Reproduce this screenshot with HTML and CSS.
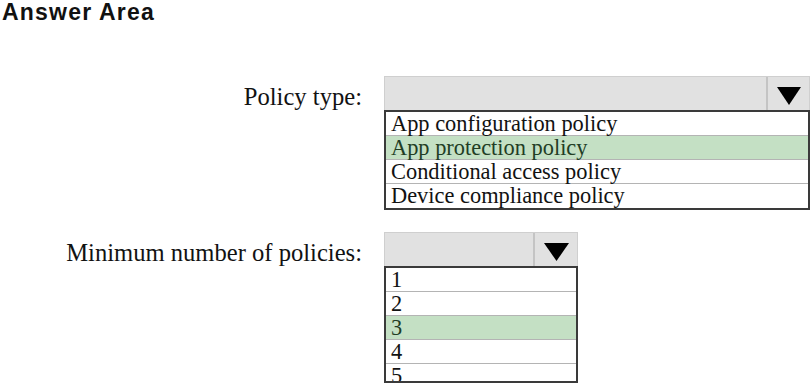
FILE: index.html
```html
<!DOCTYPE html>
<html lang="en">
  <head>
    <meta charset="UTF-8" />
    <meta name="viewport" content="width=device-width, initial-scale=1.0" />
    <title>Answer Area</title>
    <link rel="stylesheet" href="styles.css">
  </head>
  <body>
    <div class="answer-area">
      <h1>Answer Area</h1>

      <div class="question question-type">
        <div class="question-label">Policy type:</div>
        <div class="dropdown dropdown-policy">
          <div class="dropdown-head">
            <div class="dropdown-field"></div>
            <div class="dropdown-toggle">
              <svg width="24" height="18" viewBox="0 0 24 18">
                <polygon points="0,0 24,0 12,18" fill="#000" />
              </svg>
            </div>
          </div>
          <ul class="dropdown-list">
            <li>App configuration policy</li>
            <li class="selected">App protection policy</li>
            <li>Conditional access policy</li>
            <li>Device compliance policy</li>
          </ul>
        </div>
      </div>

      <div class="question question-count">
        <div class="question-label">Minimum number of policies:</div>
        <div class="dropdown dropdown-count">
          <div class="dropdown-head">
            <div class="dropdown-field"></div>
            <div class="dropdown-toggle">
              <svg width="25" height="18" viewBox="0 0 25 18">
                <polygon points="0,0 25,0 12.5,18" fill="#000" />
              </svg>
            </div>
          </div>
          <ul class="dropdown-list">
            <li>1</li>
            <li>2</li>
            <li class="selected">3</li>
            <li>4</li>
            <li>5</li>
          </ul>
        </div>
      </div>
    </div>
  </body>
</html>
```

FILE: styles.css
```css
:root {
  --text: #121212;
  --head-bg: #e1e1e1;
  --head-border: #cfcfcf;
  --toggle-line: #c4c4c4;
  --list-border: #3a3a3a;
  --row-line: #b4b4b4;
  --selected: #c4e0c4;
  --selected-text: #223d24;
}

* {
  margin: 0;
  padding: 0;
  box-sizing: border-box;
}

body {
  background-color: #fff;
  color: var(--text);
  font-family: "Liberation Serif", "Times New Roman", serif;
}

.answer-area {
  padding-top: 1px;
}

.answer-area h1 {
  padding-left: 2px;
  font-family: "Liberation Sans", Arial, sans-serif;
  font-weight: 700;
  font-size: 23px;
  line-height: 23px;
  letter-spacing: 1.2px;
  color: #111;
}

.question {
  display: flex;
  align-items: flex-start;
  gap: 22px;
}

.question-type {
  margin-top: 52px;
}

.question-count {
  margin-top: 22px;
}

.question-label {
  width: 362px;
  text-align: right;
  font-size: 24.6px;
  line-height: 34px;
  padding-top: 4px;
}

.dropdown {
  display: flex;
  flex-direction: column;
}

.dropdown-policy {
  width: 426px;
}

.dropdown-count {
  width: 194px;
}

.dropdown-head {
  display: flex;
  height: 34px;
  background-color: var(--head-bg);
  border: 1px solid var(--head-border);
  border-bottom: none;
}

.dropdown-field {
  flex: 1;
}

.dropdown-toggle {
  width: 43px;
  display: flex;
  justify-content: center;
  padding-top: 10px;
  border-left: 2px solid var(--toggle-line);
}

.dropdown-count .dropdown-toggle {
  width: 44px;
}

.dropdown-list {
  list-style: none;
  border: 2px solid var(--list-border);
  background-color: #fff;
}

.dropdown-count .dropdown-list {
  height: 117px;
  overflow: hidden;
}

.dropdown-list li {
  height: 24px;
  padding-left: 5px;
  font-size: 22.4px;
  line-height: 24px;
  border-bottom: 1px solid var(--row-line);
}

.dropdown-list li:last-child {
  border-bottom: none;
}

.dropdown-list li.selected {
  background-color: var(--selected);
  color: var(--selected-text);
}
```
